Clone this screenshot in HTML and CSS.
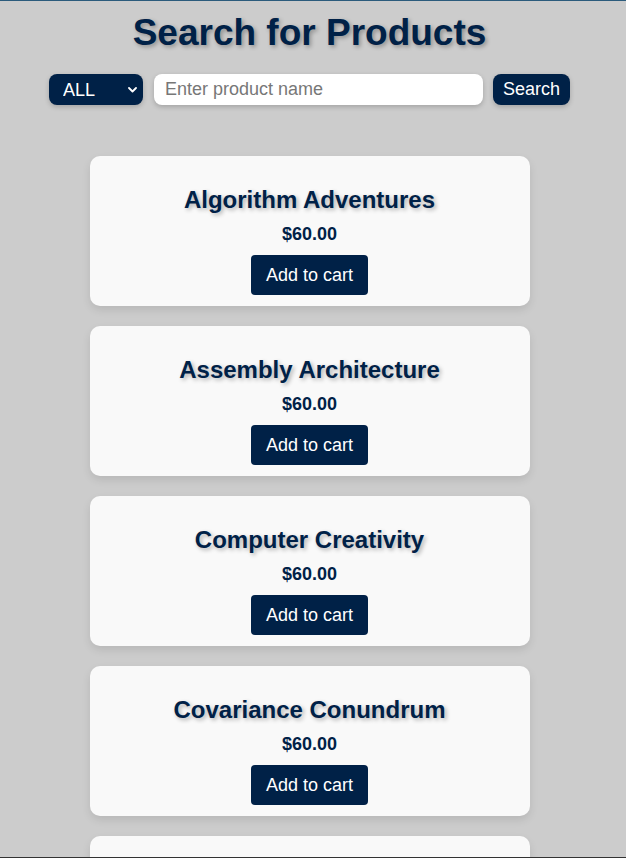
FILE: index.html
```html
<!DOCTYPE html>
<html lang="en">
<head>
<meta charset="utf-8">
<title>Search for Products</title>
<link rel="stylesheet" href="styles.css">
</head>
<body>
<div class="page">
  <header class="header">
    <h1 class="title">Search for Products</h1>
    <form class="search-row">
      <span class="select-wrap">
        <select class="category">
          <option>ALL</option>
        </select>
        <svg class="chevron" width="9" height="6" viewBox="0 0 9 6"><path d="M1 1l3.5 3.5L8 1" fill="none" stroke="#fff" stroke-width="1.8" stroke-linecap="round" stroke-linejoin="round"/></svg>
      </span>
      <input class="query" type="text" placeholder="Enter product name">
      <button class="search-btn" type="button">Search</button>
    </form>
  </header>
  <main class="list">
    <div class="card"><h2 class="name">Algorithm Adventures</h2><p class="price">$60.00</p><button class="cart-btn" type="button">Add to cart</button></div>
    <div class="card"><h2 class="name">Assembly Architecture</h2><p class="price">$60.00</p><button class="cart-btn" type="button">Add to cart</button></div>
    <div class="card"><h2 class="name">Computer Creativity</h2><p class="price">$60.00</p><button class="cart-btn" type="button">Add to cart</button></div>
    <div class="card"><h2 class="name">Covariance Conundrum</h2><p class="price">$60.00</p><button class="cart-btn" type="button">Add to cart</button></div>
    <div class="card"><h2 class="name">Data Structures Delight</h2><p class="price">$60.00</p><button class="cart-btn" type="button">Add to cart</button></div>
  </main>
</div>
<div class="bottom-edge"></div>
</body>
</html>
```
FILE: styles.css
```css
html, body {
  margin: 0;
  padding: 0;
}
body {
  background: #cccccc;
  font-family: "Liberation Sans", Arial, sans-serif;
  color: #002147;
  border-top: 1px solid #2b5b7c;
}
.page {
  padding-right: 7px;
}
.header {
  padding-top: 11px;
  display: flex;
  flex-direction: column;
  align-items: center;
}
.title {
  margin: 0;
  font-size: 37px;
  font-weight: bold;
  color: #002147;
  text-shadow: 2px 2px 4px rgba(0, 0, 0, 0.3);
}
.search-row {
  margin: 20px 0 0;
  display: flex;
  align-items: center;
  gap: 10px;
}
.select-wrap {
  position: relative;
  display: block;
  height: 31px;
}
.category {
  appearance: none;
  -webkit-appearance: none;
  width: 94px;
  height: 31px;
  border: none;
  border-radius: 8px;
  background: #002147;
  color: #ffffff;
  font-family: "Liberation Sans", Arial, sans-serif;
  font-size: 18px;
  padding: 0 0 0 14px;
  box-shadow: 0 2px 5px rgba(0, 0, 0, 0.2);
  outline: none;
}
.chevron {
  position: absolute;
  right: 6px;
  top: 13px;
  pointer-events: none;
}
.query {
  width: 329px;
  height: 31px;
  box-sizing: border-box;
  border: none;
  border-radius: 8px;
  background: #ffffff;
  padding: 0 11px;
  font-family: "Liberation Sans", Arial, sans-serif;
  font-size: 18px;
  color: #333;
  box-shadow: 0 2px 5px rgba(0, 0, 0, 0.2);
  outline: none;
  margin-left: 1px;
}
.query::placeholder {
  color: #777777;
}
.search-btn {
  height: 31px;
  border: none;
  border-radius: 8px;
  background: #002147;
  color: #ffffff;
  font-family: "Liberation Sans", Arial, sans-serif;
  font-size: 18px;
  padding: 0 10px;
  box-shadow: 0 2px 5px rgba(0, 0, 0, 0.2);
}
.list {
  margin-top: 51px;
  display: flex;
  flex-direction: column;
  align-items: center;
  gap: 20px;
  padding-bottom: 20px;
}
.card {
  width: 440px;
  box-sizing: border-box;
  background: #f9f9f9;
  border-radius: 10px;
  box-shadow: 0 4px 8px rgba(0, 0, 0, 0.1);
  padding: 30px 20px 11px;
  display: flex;
  flex-direction: column;
  align-items: center;
}
.name {
  margin: 0 0 10px;
  font-size: 24px;
  font-weight: bold;
  color: #002147;
  text-shadow: 2px 2px 4px rgba(0, 0, 0, 0.3);
}
.price {
  margin: 0 0 10px;
  font-size: 18px;
  font-weight: bold;
  color: #002147;
}
.cart-btn {
  border: none;
  border-radius: 4px;
  background: #002147;
  color: #ffffff;
  font-family: "Liberation Sans", Arial, sans-serif;
  font-size: 18px;
  line-height: 22px;
  padding: 9px 15px;
}
.bottom-edge {
  position: fixed;
  left: 0;
  right: 0;
  bottom: 0;
  height: 1px;
  background: #333333;
}
```
